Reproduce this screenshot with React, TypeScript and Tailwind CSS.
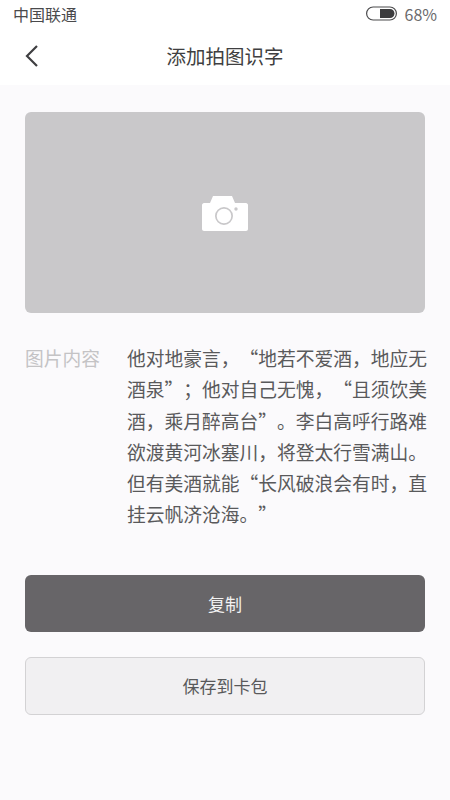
import React from 'react';

const cjk = "font-['Noto_Sans_CJK_SC','Noto_Sans',sans-serif] [text-spacing-trim:space-all]";

const BatteryIcon = () => (
  <svg width="31" height="15" viewBox="0 0 31 15" fill="none">
    <rect x="0.600" y="1" width="29.800" height="13" rx="6.500" stroke="#4a4a4c" strokeWidth="1.200" />
    <path d="M14 3H24C26.500 3 28.500 5 28.500 7.500C28.500 10 26.500 12 24 12H14Z" fill="#3c3c3e" />
  </svg>
);

const BackIcon = () => (
  <svg width="16" height="24" viewBox="0 0 16 24" fill="none">
    <path d="M13 2L3 12L13 22" stroke="#3f3f41" strokeWidth="2.2" />
  </svg>
);

const CameraIcon = () => (
  <svg width="46" height="36" viewBox="0 0 46 36">
    <path
      fillRule="evenodd"
      fill="#ffffff"
      d="M2 8H8L11 1H30L33 8H44C45 8 46 9 46 10V34C46 35 45 36 44 36H2C1 36 0 35 0 34V10C0 9 1 8 2 8ZM22 12A9 9 0 1 0 22 30A9 9 0 1 0 22 12ZM22 13.700A7.300 7.300 0 1 1 22 28.300A7.300 7.300 0 1 1 22 13.700ZM34 12.300A1.700 1.700 0 1 0 34 15.700A1.700 1.700 0 1 0 34 12.300Z"
    />
  </svg>
);

export default function App() {
  return (
    <div className={`${cjk} flex min-h-[800px] w-[450px] flex-col bg-[#fbfafc]`}>
      <div className="bg-white">
        <div className="flex h-[27px] items-center justify-between pl-[13px] pr-[13px]">
          <span className="text-[16px] text-[#4a4a4c]">中国联通</span>
          <div className="flex items-center gap-[8px]">
            <BatteryIcon />
            <span className="text-[16px] text-[#6a6a6c]">68%</span>
          </div>
        </div>
        <div className="relative flex h-[58px] items-center justify-center">
          <div className="absolute left-[24px] top-[17px]">
            <BackIcon />
          </div>
          <h1 className="text-[19.500px] font-normal text-[#3f3f41]">添加拍图识字</h1>
        </div>
      </div>

      <div className="flex flex-col px-[25px] pt-[27px]">
        <div className="flex h-[201px] items-center justify-center rounded-[6px] bg-[#c9c8ca]">
          <CameraIcon />
        </div>

        <div className="mt-[29px] flex">
          <span className="w-[102px] shrink-0 text-[18.750px] leading-[31.300px] text-[#c4c3c5]">图片内容</span>
          <p className="w-[304px] shrink-0 text-[18.750px] leading-[31.300px] text-[#59595b]">
            他对地豪言，“地若不爱酒，地应无酒泉”；他对自己无愧，“且须饮美酒，乘月醉高台”。李白高呼行路难欲渡黄河冰塞川，将登太行雪满山。但有美酒就能“长风破浪会有时，直挂云帆济沧海。”
          </p>
        </div>

        <button className="mt-[45px] flex h-[57px] items-center justify-center rounded-[6px] bg-[#676568] text-[17px] text-[#f2f2f2]">
          复制
        </button>
        <button className="mt-[25px] flex h-[58px] items-center justify-center rounded-[6px] border border-[#d3d2d4] bg-[#f1f0f2] text-[17px] text-[#59595b]">
          保存到卡包
        </button>
      </div>
    </div>
  );
}
